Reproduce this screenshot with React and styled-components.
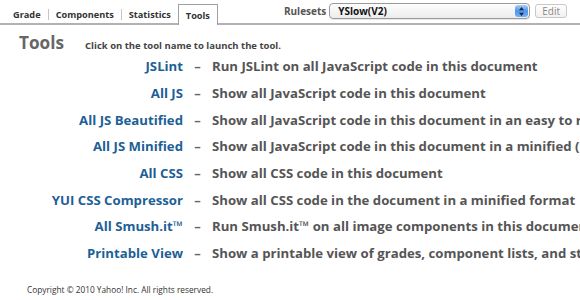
import React from 'react';
import styled, {createGlobalStyle} from "styled-components";

const GlobalStyle = createGlobalStyle`
  html, body {
    margin: 0;
    padding: 0;
    background: #fff;
    overflow: hidden;
  }
  body {
    font-family: "Open Sans", "DejaVu Sans", sans-serif;
    width: 580px;
    height: 300px;
  }
`;

const tools = [
  ['JSLint', 'Run JSLint on all JavaScript code in this document'],
  ['All JS', 'Show all JavaScript code in this document'],
  ['All JS Beautified', 'Show all JavaScript code in this document in an easy to read format'],
  ['All JS Minified', 'Show all JavaScript code in this document in a minified (no comments or white space) format'],
  ['All CSS', 'Show all CSS code in this document'],
  ['YUI CSS Compressor', 'Show all CSS code in the document in a minified format'],
  ['All Smush.it\u2122', 'Run Smush.it\u2122 on all image components in this document'],
  ['Printable View', 'Show a printable view of grades, component lists, and statistics'],
];

function App() {
  return (
    <Page>
      <GlobalStyle/>
      <Header>
        <Tabs>
          <Tab>Grade</Tab>
          <Divider/>
          <Tab>Components</Tab>
          <Divider/>
          <Tab>Statistics</Tab>
          <Tab active>Tools</Tab>
        </Tabs>
        <Rulesets>
          <Label>Rulesets</Label>
          <Select>
            <span>YSlow(V2)</span>
            <Arrows>
              <svg width="7" height="11" viewBox="0 0 7 11">
                <path d="M3.5 1 L6 4.2 L1 4.2 Z M3.5 10 L6 6.8 L1 6.8 Z" fill="#1b2c44"/>
              </svg>
            </Arrows>
          </Select>
          <EditButton>Edit</EditButton>
        </Rulesets>
      </Header>
      <Intro>
        <Title>Tools</Title>
        <Hint>Click on the tool name to launch the tool.</Hint>
      </Intro>
      <ToolList>
        {tools.map(([name, desc]) => (
          <React.Fragment key={name}>
            <ToolName>{name}</ToolName>
            <Dash>&ndash;</Dash>
            <ToolDesc>{desc}</ToolDesc>
          </React.Fragment>
        ))}
      </ToolList>
      <Footer>Copyright &copy; 2010 Yahoo! Inc. All rights reserved.</Footer>
    </Page>
  );
}

const Page = styled.div`
  width: 580px;
  height: 300px;
  overflow: hidden;
  white-space: nowrap;
`;

const Header = styled.div`
  display: flex;
  height: 25px;
  box-sizing: border-box;
  border-bottom: 2px solid #b2b2b2;
  padding-left: 6px;
`;

const Tabs = styled.div`
  display: flex;
  align-self: flex-end;
  height: 21px;
  margin-bottom: -2px;
`;

const Tab = styled.div`
  display: flex;
  align-items: center;
  box-sizing: border-box;
  padding: 0 7px;
  font-size: 9.2px;
  font-weight: bold;
  color: #333;
  ${p => p.active && `
    border: 1px solid #a0a0a0;
    border-bottom: none;
    background: #fff;
  `}
`;

const Divider = styled.div`
  width: 1px;
  height: 11px;
  margin-top: 5px;
  background: #c4c4c4;
`;

const Rulesets = styled.div`
  display: flex;
  align-items: center;
  margin-left: auto;
  margin-right: 13px;
  margin-top: 3px;
  height: 16px;
`;

const Label = styled.span`
  font-size: 10px;
  font-weight: bold;
  color: #555;
  margin-right: 3px;
`;

const Select = styled.div`
  display: flex;
  align-items: center;
  justify-content: space-between;
  box-sizing: border-box;
  width: 201px;
  height: 16px;
  padding: 0 1px 0 8px;
  border: 1px solid #9a9a9a;
  border-radius: 4px;
  background: linear-gradient(#fdfdfd, #ececec);
  box-shadow: 0 1px 1px rgba(0,0,0,0.1);
  font-size: 10px;
  font-weight: bold;
  color: #111;
`;

const Arrows = styled.div`
  display: flex;
  align-items: center;
  justify-content: center;
  width: 13px;
  height: 12px;
  border-radius: 3px;
  background: linear-gradient(#a9cdf7, #4f95ea 50%, #6fb0f5);
`;

const EditButton = styled.div`
  display: flex;
  align-items: center;
  box-sizing: border-box;
  height: 14px;
  margin-left: 5px;
  padding: 0 6px;
  border: 1px solid #c8c8c8;
  border-radius: 3px;
  background: linear-gradient(#fff, #f1f1f1);
  font-size: 10px;
  color: #8a8a8a;
`;

const Intro = styled.div`
  display: flex;
  align-items: baseline;
  padding: 7px 0 0 19px;
`;

const Title = styled.h2`
  margin: 0;
  line-height: 21px;
  font-size: 17.2px;
  font-weight: bold;
  color: #666;
`;

const Hint = styled.span`
  margin-left: 21px;
  font-size: 9.5px;
  font-weight: bold;
  color: #444;
`;

const ToolList = styled.div`
  display: grid;
  grid-template-columns: 183px 29px auto;
  grid-auto-rows: 26.7px;
  align-items: center;
`;

const ToolName = styled.a`
  text-align: right;
  font-size: 13.2px;
  font-weight: bold;
  color: #1d5f96;
`;

const Dash = styled.span`
  text-align: center;
  font-size: 13px;
  font-weight: bold;
  color: #666;
`;

const ToolDesc = styled.span`
  font-size: 13.2px;
  font-weight: bold;
  color: #555;
`;

const Footer = styled.div`
  padding: 17px 0 0 27px;
  line-height: 12px;
  font-size: 8.3px;
  color: #333;
`;

export default App;
